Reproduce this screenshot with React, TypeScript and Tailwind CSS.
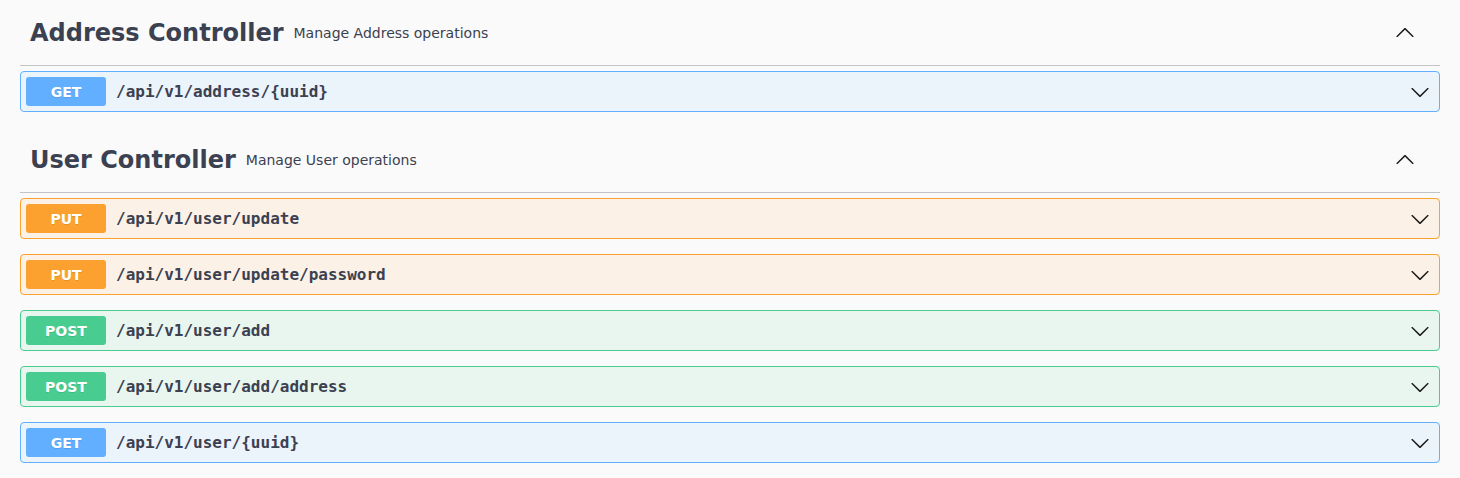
type Method = "GET" | "PUT" | "POST";

type Operation = {
  method: Method;
  path: string;
};

type Tag = {
  name: string;
  description: string;
  operations: Operation[];
};

const tags: Tag[] = [
  {
    name: "Address Controller",
    description: "Manage Address operations",
    operations: [{ method: "GET", path: "/api/v1/address/{uuid}" }],
  },
  {
    name: "User Controller",
    description: "Manage User operations",
    operations: [
      { method: "PUT", path: "/api/v1/user/update" },
      { method: "PUT", path: "/api/v1/user/update/password" },
      { method: "POST", path: "/api/v1/user/add" },
      { method: "POST", path: "/api/v1/user/add/address" },
      { method: "GET", path: "/api/v1/user/{uuid}" },
    ],
  },
];

const methodStyles: Record<Method, { block: string; badge: string }> = {
  GET: {
    block: "bg-[#ebf3fb] border-[#61affe]",
    badge: "bg-[#61affe]",
  },
  PUT: {
    block: "bg-[#fbf1e6] border-[#fca130]",
    badge: "bg-[#fca130]",
  },
  POST: {
    block: "bg-[#e8f6ef] border-[#49cc90]",
    badge: "bg-[#49cc90]",
  },
};

const arrowPath =
  "M17.418 6.109c.272-.268.709-.268.979 0s.271.701 0 .969l-7.908 7.83c-.27.268-.707.268-.979 0l-7.908-7.83c-.27-.268-.27-.701 0-.969.271-.268.709-.268.979 0L10 13.25l7.418-7.141z";

function Arrow({ up }: { up?: boolean }) {
  return (
    <svg
      width="20"
      height="20"
      viewBox="0 0 20 20"
      className={up ? "rotate-180" : ""}
      aria-hidden="true"
    >
      <path d={arrowPath} fill="#1b1b1b" />
    </svg>
  );
}

function OperationRow({ op }: { op: Operation }) {
  const style = methodStyles[op.method];
  return (
    <div
      className={`mb-[15px] flex items-center rounded-[4px] border p-[5px] ${style.block}`}
    >
      <span
        className={`flex h-[29px] w-20 items-center justify-center rounded-[3px] text-sm font-bold text-white [text-shadow:0_1px_0_rgba(0,0,0,0.1)] ${style.badge}`}
      >
        {op.method}
      </span>
      <span className="flex-1 px-[10px] font-['DejaVu_Sans_Mono',monospace] text-base font-bold text-[#3b4151]">
        {op.path}
      </span>
      <span className="mr-[4px] flex items-center">
        <Arrow />
      </span>
    </div>
  );
}

export default function App() {
  return (
    <div className="min-h-screen bg-[#fafafa] px-5 font-['DejaVu_Sans',sans-serif] text-[#3b4151]">
      {tags.map((tag) => (
        <section key={tag.name}>
          {/* TAG HEADER */}
          <div className="mb-[5px] flex h-[66px] items-center border-b border-[#c2c3c6] pl-[10px] pr-[25px]">
            <h3 className="text-2xl font-bold">{tag.name}</h3>
            <small className="flex-1 px-[10px] text-sm">{tag.description}</small>
            <Arrow up />
          </div>

          {/* OPERATIONS */}
          {tag.operations.map((op) => (
            <OperationRow key={op.method + op.path} op={op} />
          ))}
        </section>
      ))}
    </div>
  );
}
